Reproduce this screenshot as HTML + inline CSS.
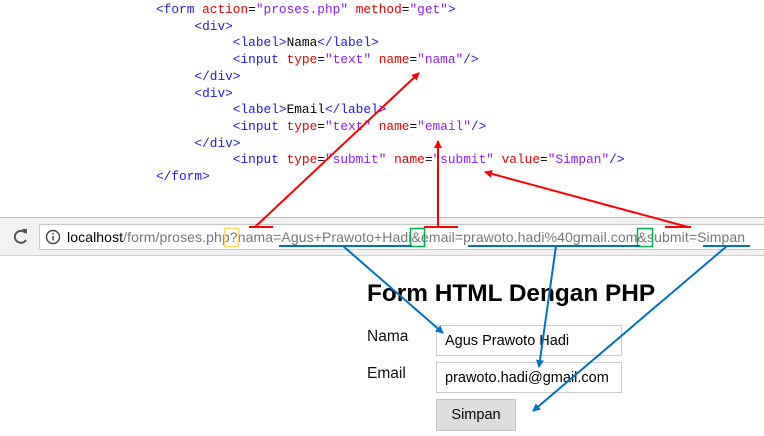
<!DOCTYPE html>
<html><head><meta charset="utf-8"><style>
body{margin:0;width:764px;height:436px;background:#fff;position:relative;overflow:hidden;font-family:"Liberation Sans",Arial,sans-serif}
pre{position:absolute;left:156px;top:2px;margin:0;font-family:"Liberation Mono",monospace;font-size:12.8px;line-height:16.7px;color:#000}
.t{color:#1a1ae6}.a{color:#e60000}.v{color:#8c1aff}
.bar{position:absolute;left:0;top:217px;width:764px;height:37px;background:#f2f2f2;border-top:1px solid #bdbdbd;border-bottom:1px solid #d0d0d0}
.box{position:absolute;left:39px;top:224px;width:730px;height:26px;background:#fff;border:1px solid #c8c8c8;border-radius:2px;box-sizing:border-box}
.url{position:absolute;left:67px;top:229px;font-size:14px;color:#777;white-space:nowrap;letter-spacing:0.1px}
.url b{font-weight:normal;color:#000}
h1{position:absolute;left:367px;top:280px;margin:0;font-size:24.4px;font-weight:bold;color:#000;font-family:"Liberation Sans",sans-serif}
.lbl{position:absolute;left:367px;font-size:15.5px;color:#111}
.in{position:absolute;left:436px;width:186px;height:31px;border:1px solid #ccc;box-sizing:border-box;font-size:14.5px;padding:7px 0 0 8px;color:#000}
.btn{position:absolute;left:436px;top:399px;width:80px;height:32px;background:#ddd;border:1px solid #c4c4c4;box-sizing:border-box;font-size:14.5px;text-align:center;padding-top:7px}
svg{position:absolute;left:0;top:0}
</style></head><body>
<pre><span class="t">&lt;form</span> <span class="a">action</span>=<span class="v">"proses.php"</span> <span class="a">method</span>=<span class="v">"get"</span><span class="t">&gt;</span>
     <span class="t">&lt;div&gt;</span>
          <span class="t">&lt;label&gt;</span>Nama<span class="t">&lt;/label&gt;</span>
          <span class="t">&lt;input</span> <span class="a">type</span>=<span class="v">"text"</span> <span class="a">name</span>=<span class="v">"nama"</span><span class="t">/&gt;</span>
     <span class="t">&lt;/div&gt;</span>
     <span class="t">&lt;div&gt;</span>
          <span class="t">&lt;label&gt;</span>Email<span class="t">&lt;/label&gt;</span>
          <span class="t">&lt;input</span> <span class="a">type</span>=<span class="v">"text"</span> <span class="a">name</span>=<span class="v">"email"</span><span class="t">/&gt;</span>
     <span class="t">&lt;/div&gt;</span>
          <span class="t">&lt;input</span> <span class="a">type</span>=<span class="v">"submit"</span> <span class="a">name</span>=<span class="v">"submit"</span> <span class="a">value</span>=<span class="v">"Simpan"</span><span class="t">/&gt;</span>
<span class="t">&lt;/form&gt;</span></pre>
<div class="bar"></div>
<div class="box"></div>
<div class="url"><b>localhost</b>/form/proses.php?nama=Agus+Prawoto+Hadi&amp;email=prawoto.hadi%40gmail.com&amp;submit=Simpan</div>
<h1>Form HTML Dengan PHP</h1>
<div class="lbl" style="top:328px">Nama</div>
<div class="lbl" style="top:365px">Email</div>
<div class="in" style="top:325px">Agus Prawoto Hadi</div>
<div class="in" style="top:362px">prawoto.hadi@gmail.com</div>
<div class="btn">Simpan</div>
<svg width="764" height="436">
<defs>
<marker id="r" markerWidth="8" markerHeight="8" refX="7" refY="4" orient="auto" markerUnits="userSpaceOnUse"><path d="M0,0 L8,4 L0,8 Z" fill="#f00"/></marker>
<marker id="b" markerWidth="8" markerHeight="8" refX="7" refY="4" orient="auto" markerUnits="userSpaceOnUse"><path d="M0,0 L8,4 L0,8 Z" fill="#0070c0"/></marker>
</defs>
<path d="M25.5,233 A6,6 0 1 0 26,240" fill="none" stroke="#555" stroke-width="2"/>
<path d="M22,229 L27,229 L27,234 Z" fill="#555"/>
<circle cx="53" cy="237" r="6.5" fill="none" stroke="#444" stroke-width="1.4"/>
<rect x="52.3" y="236" width="1.5" height="4.5" fill="#444"/><rect x="52.3" y="233" width="1.5" height="1.5" fill="#444"/>
<rect x="224.5" y="228.5" width="14" height="18" fill="none" stroke="#ffd966" stroke-width="1.5"/>
<rect x="410.5" y="228.5" width="14" height="18" fill="none" stroke="#00b050" stroke-width="1.5"/>
<rect x="637.5" y="228.5" width="15" height="18" fill="none" stroke="#00b050" stroke-width="1.5"/>
<g stroke="#f00" stroke-width="2" fill="none">
<line x1="249" y1="227" x2="273" y2="227"/>
<line x1="424" y1="227" x2="458" y2="227"/>
<line x1="665" y1="227" x2="691" y2="227"/>
<line x1="255" y1="227" x2="419" y2="73" marker-end="url(#r)"/>
<line x1="438" y1="227" x2="438" y2="141" marker-end="url(#r)"/>
<line x1="688" y1="227" x2="485" y2="172" marker-end="url(#r)"/>
</g>
<g stroke="#0070c0" stroke-width="2" fill="none">
<line x1="279" y1="246" x2="412" y2="246"/>
<line x1="468" y1="246" x2="640" y2="246"/>
<line x1="703" y1="246" x2="750" y2="246"/>
<line x1="343" y1="246" x2="443" y2="333" marker-end="url(#b)"/>
<line x1="556" y1="246" x2="539" y2="367" marker-end="url(#b)"/>
<line x1="727" y1="246" x2="533" y2="411" marker-end="url(#b)"/>
</g>
</svg>
</body></html>
